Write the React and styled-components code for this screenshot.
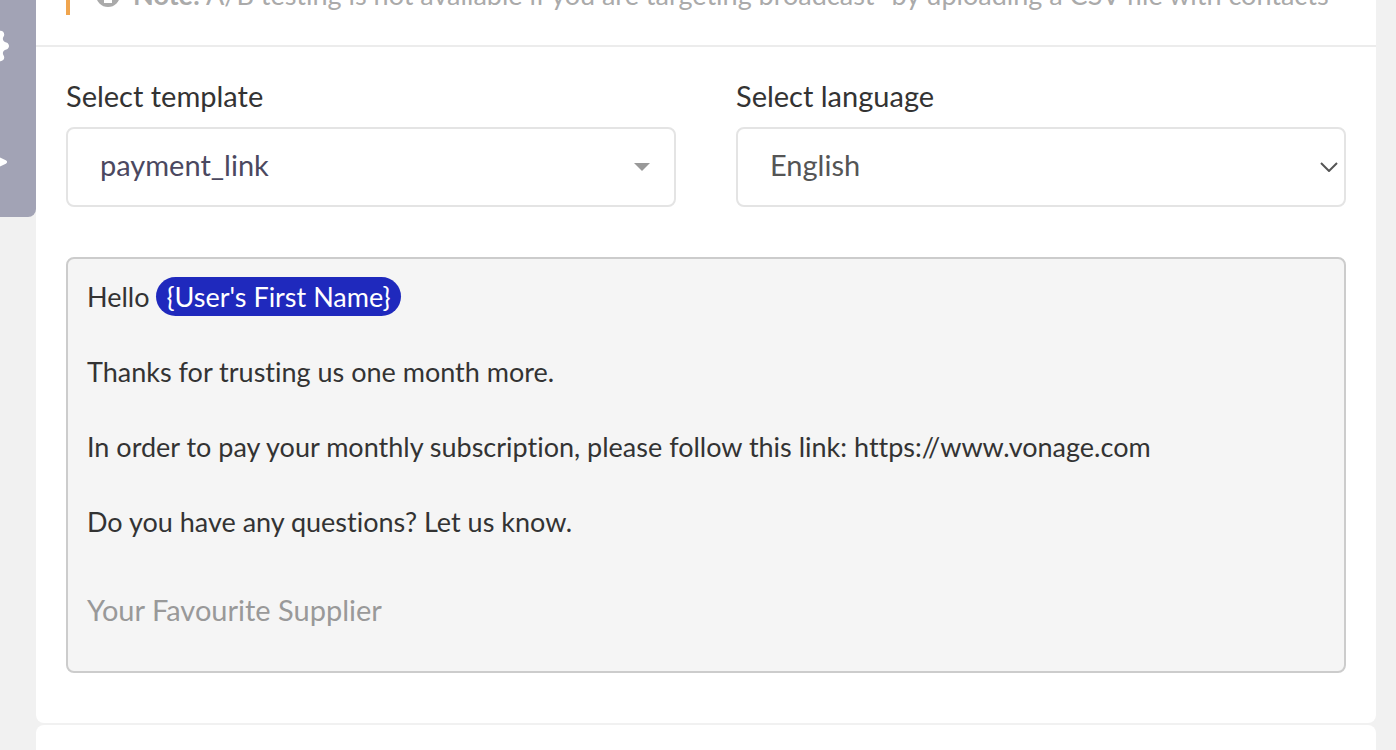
import React, { useState } from 'react';
import styled, { createGlobalStyle } from 'styled-components';
import { BsGearFill } from 'react-icons/bs';

const GlobalStyle = createGlobalStyle`
  * {
    box-sizing: border-box;
  }
  body {
    margin: 0;
    overflow: hidden;
    background: #f1f1f1;
    color: #333;
    font-family: Lato, 'Open Sans', sans-serif;
    font-size: 29px;
    font-variant-ligatures: none;
    line-height: 36px;
  }
`;

const Page = styled.div`
  display: flex;
  align-items: flex-start;
  min-height: 100vh;
  padding-right: 20px;
`;

const Sidebar = styled.nav`
  display: flex;
  flex: none;
  flex-direction: column;
  align-items: flex-end;
  gap: 76px;
  width: 36px;
  padding: 26px 27px 35px 0;
  overflow: hidden;
  background: #a2a3b5;
  border-radius: 0 0 8px 0;
`;

const SidebarLink = styled.a`
  display: block;
  color: #fff;

  svg {
    display: block;
  }
`;

const Content = styled.main`
  display: flex;
  flex: 1;
  flex-direction: column;
  gap: 2px;
  min-width: 0;
`;

const Card = styled.section`
  padding-bottom: 50px;
  background: #fff;
  border-radius: ${props => (props.$first ? '0 0 8px 8px' : '8px')};
`;

const NoteArea = styled.div`
  padding: 0 30px 30px;
  border-bottom: 2px solid #ececec;
`;

const Note = styled.div`
  display: flex;
  align-items: center;
  gap: 13px;
  height: 40px;
  margin-top: -25px;
  padding-left: 26px;
  border-left: 4px solid #f0a54e;
  color: #aaa;
  font-size: 27px;
  white-space: nowrap;

  svg {
    flex: none;
  }
`;

const Fields = styled.div`
  display: grid;
  grid-template-columns: 1fr 1fr;
  gap: 60px;
  padding: 31px 30px 50px;
`;

const Field = styled.div`
  display: flex;
  flex-direction: column;
  gap: 13px;
`;

const SelectBox = styled.div`
  display: grid;
  align-items: center;

  > * {
    grid-area: 1 / 1;
  }
  svg {
    justify-self: end;
    margin-right: ${props => props.$iconGap};
    pointer-events: none;
  }
`;

const Select = styled.select`
  width: 100%;
  height: 80px;
  padding: 0 32px 4px;
  appearance: none;
  background: #fff;
  border: 2px solid #e4e4e4;
  border-radius: 8px;
  color: ${props => props.$color};
  font: inherit;
`;

const Message = styled.article`
  margin: 0 30px;
  padding: 18px 19px 42px;
  background: #f5f5f5;
  border: 2px solid #ccc;
  border-radius: 8px;
  font-size: 27px;
  line-height: 39px;

  p {
    margin: 0 0 36px;
  }
`;

const Variable = styled.span`
  display: inline-block;
  padding: 0 10px;
  background: #1f29bd;
  border-radius: 20px;
  color: #fff;
`;

const Signature = styled.footer`
  margin-top: 49px;
  color: #999;
  font-size: 29px;
`;

function InfoIcon() {
  return (
    <svg width="24" height="24" viewBox="0 0 24 24">
      <circle cx="12" cy="12" r="12" fill="currentColor" />
      <path d="M10 4h4v4h-4zM9 10h5v7h2v3H8v-3h2v-4H9z" fill="#fff" />
    </svg>
  );
}

function SendIcon() {
  return (
    <svg width="40" height="40" viewBox="0 0 40 40" fill="none">
      <path
        d="M3 5l33 15L3 35l5-15zM8 20h18"
        stroke="currentColor"
        strokeWidth="4"
        strokeLinejoin="round"
      />
    </svg>
  );
}

export default function App() {
  const [template, setTemplate] = useState('payment_link');
  const [language, setLanguage] = useState('en');

  return (
    <Page>
      <GlobalStyle />
      <Sidebar>
        <SidebarLink href="#settings" aria-label="Settings">
          <BsGearFill size={40} />
        </SidebarLink>
        <SidebarLink href="#send" aria-label="Send">
          <SendIcon />
        </SidebarLink>
      </Sidebar>
      <Content>
        <Card $first>
          <NoteArea>
            <Note>
              <InfoIcon />
              <span>
                <b>Note:</b> A/B testing is not available if you are targeting
                broadcast" by uploading a CSV file with contacts
              </span>
            </Note>
          </NoteArea>
          <Fields>
            <Field>
              <label htmlFor="template">Select template</label>
              <SelectBox $iconGap="26px">
                <Select
                  id="template"
                  $color="#4b4860"
                  value={template}
                  onChange={e => setTemplate(e.target.value)}
                >
                  <option value="payment_link">payment_link</option>
                </Select>
                <svg width="16" height="8" viewBox="0 0 16 8">
                  <path d="M0 0h16L8 8z" fill="#999" />
                </svg>
              </SelectBox>
            </Field>
            <Field>
              <label htmlFor="language">Select language</label>
              <SelectBox $iconGap="8px">
                <Select
                  id="language"
                  $color="#555"
                  value={language}
                  onChange={e => setLanguage(e.target.value)}
                >
                  <option value="en">English</option>
                </Select>
                <svg width="18" height="10" viewBox="0 0 18 10" fill="none">
                  <path d="M1 1l8 8 8-8" stroke="#555" strokeWidth="2" />
                </svg>
              </SelectBox>
            </Field>
          </Fields>
          <Message>
            <p>
              Hello <Variable>{"{User's First Name}"}</Variable>
            </p>
            <p>Thanks for trusting us one month more.</p>
            <p>
              In order to pay your monthly subscription, please follow this
              link: https://www.vonage.com
            </p>
            <p>Do you have any questions? Let us know.</p>
            <Signature>Your Favourite Supplier</Signature>
          </Message>
        </Card>
        <Card />
      </Content>
    </Page>
  );
}
